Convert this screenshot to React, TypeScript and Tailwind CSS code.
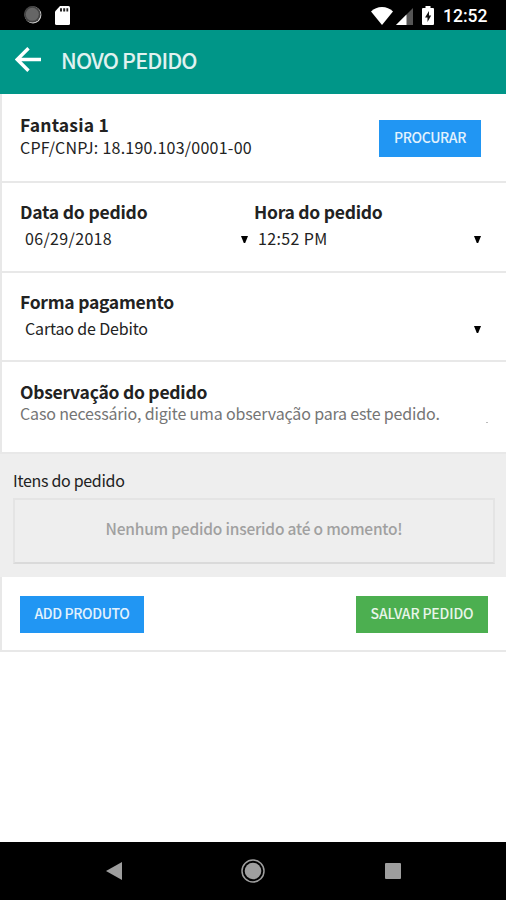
import type { ReactNode } from 'react'

const Section = ({ className, children }: { className: string; children: ReactNode }) => (
  <section className={`border-l-2 border-b-2 border-[#e8e8e8] bg-white pl-[18px] ${className}`}>
    {children}
  </section>
)

const Caret = () => (
  <svg className="mt-0.5 h-[7px] w-[7px]" viewBox="0 0 7 7" fill="#000">
    <path d="M0 0h7L4.2 7H2.8z" />
  </svg>
)

const StatusBar = () => (
  <div className="flex h-[30px] items-center bg-black pr-[18px] pl-6">
    <svg className="h-[18px] w-[18px]" viewBox="0 0 18 18">
      <circle cx="9" cy="9" r="8.4" fill="#d5d5d5" />
      <circle cx="8.3" cy="8.3" r="8.3" fill="#444" />
      <circle cx="8.3" cy="8.3" r="6.5" fill="#666" />
    </svg>
    <svg className="ml-[13px] h-[19px] w-[15px]" viewBox="0 0 15 19">
      <path d="M5 0h8.5Q15 0 15 1.5v16Q15 19 13.5 19h-12Q0 19 0 17.500V5.500z" fill="#fff" />
      <path d="M5 2.200h2v3.300H5zM8.200 2.200h2v3.300h-2zM11.400 2.200h1.800v3.300h-1.800z" fill="#222" />
    </svg>
    <svg className="mt-px ml-auto h-[18px] w-[22px]" viewBox="0 0 22 18" fill="#fff">
      <path d="M0 4.500Q4.500 0 11 0t11 4.500L11 18z" />
    </svg>
    <svg className="mt-[3px] ml-[3px] h-[17px] w-[17px]" viewBox="0 0 17 17">
      <path d="M17 0v17H0z" fill="#555" />
      <path d="M10.500 6.500V17H0z" fill="#fff" />
    </svg>
    <svg className="mt-px ml-[9px] h-[19px] w-3" viewBox="0 0 12 19">
      <path d="M3.500 0h5v2H11q1 0 1 1v15q0 1-1 1H1q-1 0-1-1V3q0-1 1-1h2.500z" fill="#fff" />
      <path d="M7 5 3 11.500h2.500V16L9.200 9.500H7z" fill="#111" />
    </svg>
    <span className="mt-[2px] ml-[9px] w-[45px] font-['Roboto',sans-serif] text-[17.5px] leading-5 font-medium whitespace-nowrap text-white">
      12:52
    </span>
  </div>
)

const Header = () => (
  <header className="flex h-16 items-center bg-[#009688] pl-[15px]">
    <svg className="-mt-1.5 h-[25px] w-[26px]" viewBox="0 0 26 25" fill="none" stroke="#fff" strokeWidth="3.4">
      <path d="M13.500 1.200 2.200 12.500l11.300 11.300M2.200 12.500H26" />
    </svg>
    <h1 className="-mt-1 ml-5 text-[21.5px] leading-8 font-medium tracking-[-0.85px] text-[#e0f2f0]">
      NOVO PEDIDO
    </h1>
  </header>
)

const NavBar = () => (
  <div className="mt-auto flex h-[58px] items-center bg-black pl-[106px]">
    <svg className="h-[18px] w-4" viewBox="0 0 16 18" fill="#9e9e9e">
      <path d="M16 0v18L0 9z" />
    </svg>
    <svg className="ml-[119px] h-6 w-6" viewBox="0 0 24 24">
      <circle cx="12" cy="12" r="11" fill="none" stroke="#9e9e9e" strokeWidth="1.500" />
      <circle cx="12" cy="12" r="8.300" fill="#9e9e9e" />
    </svg>
    <div className="ml-[120px] h-4 w-4 rounded-[1px] bg-[#9e9e9e]" />
  </div>
)

const App = () => {
  return (
    <div className="flex h-[900px] w-[506px] flex-col overflow-hidden bg-white font-['Noto_Sans_CJK_JP','Noto_Sans',sans-serif] text-[#222]">
      <StatusBar />
      <Header />

      <Section className="flex h-[89px] justify-between pr-[25px]">
        <div className="pt-[19px]">
          <h2 className="text-[17.5px] leading-6 font-bold tracking-[0.2px]">Fantasia 1</h2>
          <p className="text-[16px] leading-5 tracking-[0.25px]">CPF/CNPJ: 18.190.103/0001-00</p>
        </div>
        <button className="mt-[26px] h-[37px] w-[102px] bg-[#2196f3] pb-[3px] text-[14px] font-medium tracking-[-0.35px] text-[#e3f2fd]">
          PROCURAR
        </button>
      </Section>

      <Section className="flex h-[90px] pt-[17px] pr-[25px]">
        <div className="w-[233px]">
          <h2 className="text-[17.5px] leading-6 font-bold tracking-[-0.2px]">Data do pedido</h2>
          <div className="mt-1 flex items-center justify-between pr-[5px] pl-[5px]">
            <span className="text-[16px] leading-5 tracking-[0.35px]">06/29/2018</span>
            <Caret />
          </div>
        </div>
        <div className="flex-1">
          <h2 className="pl-px text-[17.5px] leading-6 font-bold tracking-[-0.25px]">Hora do pedido</h2>
          <div className="mt-1 flex items-center justify-between pl-[5px]">
            <span className="text-[16px] leading-5 tracking-[0.35px]">12:52 PM</span>
            <Caret />
          </div>
        </div>
      </Section>

      <Section className="h-[89px] pt-[17px] pr-[25px]">
        <h2 className="text-[17.5px] leading-6 font-bold tracking-[-0.25px]">Forma pagamento</h2>
        <div className="mt-1 flex items-center justify-between pl-[5px]">
          <span className="text-[16px] leading-5 tracking-[-0.16px]">Cartao de Debito</span>
          <Caret />
        </div>
      </Section>

      <Section className="h-[92px] pt-[19px] pr-[18px]">
        <h2 className="text-[17.5px] leading-[22px] font-bold tracking-[-0.25px]">Observação do pedido</h2>
        <div className="flex items-end justify-between">
          <span className="text-[16px] leading-5 tracking-[-0.16px] text-[#757575]">
            Caso necessário, digite uma observação para este pedido.
          </span>
          <span className="h-px w-0.5 bg-[#bbb]" />
        </div>
      </Section>

      <div className="h-[123px] bg-[#eee] pt-[14px] pr-[11px] pl-[13px]">
        <p className="text-[16px] leading-6 tracking-[-0.3px]">Itens do pedido</p>
        <div className="mt-[6px] h-[66px] border-2 border-[#e4e4e4] border-b-[#dadada] pt-4 text-center text-[15.5px] leading-6 font-medium tracking-[-0.2px] text-[#a0a0a0]">
          Nenhum pedido inserido até o momento!
        </div>
      </div>

      <Section className="flex h-[75px] justify-between pt-[19px] pr-[18px]">
        <button className="h-[37px] w-[124px] bg-[#2196f3] pb-[3px] text-[14px] font-medium tracking-[-0.35px] text-[#e3f2fd]">
          ADD PRODUTO
        </button>
        <button className="h-[37px] w-[132px] bg-[#4caf50] pb-[3px] text-[14px] font-medium tracking-[-0.15px] text-[#e8f5e9]">
          SALVAR PEDIDO
        </button>
      </Section>

      <NavBar />
    </div>
  )
}

export default App
